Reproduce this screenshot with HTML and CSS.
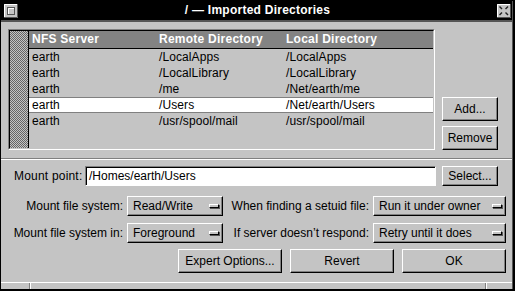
FILE: index.html
```html
<!DOCTYPE html>
<html>
<head>
<meta charset="utf-8">
<link rel="stylesheet" href="styles.css">
</head>
<body>
<div class="window">
  <div class="frame">
    <div class="titlebar">
      <span class="tb-btn">
        <svg width="14" height="14" viewBox="0 0 14 14">
          <rect x="0" y="0" width="14" height="14" fill="#c4c4c4"/>
          <path d="M0 13.5H13.5V0" fill="none" stroke="#555" stroke-width="1"/>
          <path d="M0.5 13V0.5H13" fill="none" stroke="#fff" stroke-width="1"/>
          <rect x="3.5" y="3.5" width="7" height="7" fill="#c4c4c4" stroke="#555" stroke-width="1"/>
          <path d="M4.5 10V4.5H10" fill="none" stroke="#fff" stroke-width="1"/>
        </svg>
      </span>
      <span class="title">/ — Imported Directories</span>
      <span class="tb-btn">
        <svg width="14" height="14" viewBox="0 0 14 14">
          <rect x="0" y="0" width="14" height="14" fill="#c4c4c4"/>
          <path d="M0 13.5H13.5V0" fill="none" stroke="#555" stroke-width="1"/>
          <path d="M0.5 13V0.5H13" fill="none" stroke="#fff" stroke-width="1"/>
          <g stroke="#222" stroke-width="1.4" fill="none">
            <path d="M2.5 2.5L5 5"/>
            <path d="M11 2.5L8.5 5"/>
            <path d="M2.5 11L5 8.5"/>
            <path d="M11 11L8.5 8.5"/>
          </g>
        </svg>
      </span>
    </div>

    <div class="top">
      <div class="bezel">
        <div class="bezel-in">
          <div class="scroller"></div>
          <div class="table">
            <div class="thead">
              <span>NFS Server</span><span>Remote Directory</span><span>Local Directory</span>
            </div>
            <div class="row"><span>earth</span><span>/LocalApps</span><span>/LocalApps</span></div>
            <div class="row"><span>earth</span><span>/LocalLibrary</span><span>/LocalLibrary</span></div>
            <div class="row"><span>earth</span><span>/me</span><span>/Net/earth/me</span></div>
            <div class="row sel"><span>earth</span><span>/Users</span><span>/Net/earth/Users</span></div>
            <div class="row"><span>earth</span><span>/usr/spool/mail</span><span>/usr/spool/mail</span></div>
          </div>
        </div>
      </div>
      <div class="side">
        <button class="btn side-btn">Add...</button>
        <button class="btn side-btn">Remove</button>
      </div>
    </div>

    <div class="sep"></div>

    <div class="mount-row">
      <span class="mp-label">Mount point:</span>
      <div class="field">/Homes/earth/Users</div>
      <button class="btn side-btn short">Select...</button>
    </div>

    <div class="opts">
      <span class="lbl">Mount file system:</span>
      <div class="btn popup"><span>Read/Write</span><i class="ind"></i></div>
      <span class="lbl">When finding a setuid file:</span>
      <div class="btn popup"><span>Run it under owner</span><i class="ind"></i></div>
      <span class="lbl">Mount file system in:</span>
      <div class="btn popup"><span>Foreground</span><i class="ind"></i></div>
      <span class="lbl">If server doesn’t respond:</span>
      <div class="btn popup"><span>Retry until it does</span><i class="ind"></i></div>
    </div>

    <div class="actions">
      <button class="btn act">Expert Options...</button>
      <button class="btn act">Revert</button>
      <button class="btn act">OK</button>
    </div>

    <div class="resizebar">
      <span class="rs rs-l"></span>
      <span class="rs rs-m"></span>
      <span class="rs rs-r"></span>
    </div>
  </div>
</div>
</body>
</html>
```

FILE: styles.css
```css
* { box-sizing: border-box; }
html, body { margin: 0; padding: 0; }
body {
  width: 515px;
  height: 291px;
  overflow: hidden;
  font-family: "Liberation Sans", Arial, sans-serif;
  font-size: 12px;
  color: #000;
  background: #c4c4c4;
}
.window {
  width: 515px;
  height: 291px;
  border: 1px solid #000;
  border-right-width: 2px;
  border-bottom-width: 2px;
  background: #c4c4c4;
  display: flex;
}
.frame {
  flex: 1;
  min-width: 0;
  display: flex;
  flex-direction: column;
  border-right: 1px solid #555;
}

/* title bar */
.titlebar {
  height: 21px;
  background: #000;
  border-bottom: 2px solid #555;
  display: flex;
  align-items: flex-start;
  padding: 0 1px 0 3px;
}
.tb-btn {
  width: 14px;
  height: 14px;
  margin-top: 3px;
  display: block;
}
.tb-btn svg { display: block; }
.title {
  flex: 1;
  text-align: center;
  color: #fff;
  font-weight: bold;
  font-size: 12px;
  letter-spacing: 0.25px;
  line-height: 19px;
}

/* top section */
.top {
  display: flex;
  align-items: flex-end;
  padding: 7px 0 0 7px;
}
.bezel {
  width: 427px;
  height: 121px;
  border: 1px solid;
  border-color: #808080 #fff #fff #808080;
}
.bezel-in {
  height: 100%;
  display: flex;
  border: 1px solid;
  border-color: #000 #c4c4c4 #c4c4c4 #000;
}
.scroller {
  width: 19px;
  border-right: 1px solid #000;
  background: repeating-conic-gradient(#666 0 25%, #c4c4c4 0 50%) 0 0 / 2px 2px;
}
.table { flex: 1; }
.thead, .row {
  display: grid;
  grid-template-columns: 127px 127px 1fr;
  white-space: nowrap;
}
.thead span, .row span { padding-left: 3px; }
.thead {
  height: 18px;
  line-height: 17px;
  background: #838383;
  color: #fff;
  font-weight: bold;
  letter-spacing: 0.25px;
  border-bottom: 1px solid #000;
}
.row {
  height: 16px;
  line-height: 16px;
  letter-spacing: 0.1px;
}
.row.sel {
  background: #fff;
  border-top: 1px solid #808080;
  border-bottom: 1px solid #808080;
  line-height: 14px;
}

/* buttons */
.btn {
  font-family: inherit;
  font-size: 12px;
  color: #000;
  background: #c4c4c4;
  margin: 0;
  padding: 0;
  border: 1px solid;
  border-color: #fff #000 #000 #fff;
  box-shadow: inset -1px -1px 0 #808080;
}
.side {
  display: flex;
  flex-direction: column;
  gap: 5px;
  margin-left: 7px;
}
.side-btn {
  width: 56px;
  height: 24px;
}
.side-btn.short { height: 20px; }

.sep {
  height: 2px;
  margin-top: 8px;
  border-top: 1px solid #808080;
  border-bottom: 1px solid #fff;
}

/* mount point row */
.mount-row {
  display: flex;
  align-items: center;
  margin-top: 6px;
  padding-left: 13px;
  height: 20px;
}
.mp-label { width: 71px; white-space: nowrap; letter-spacing: 0.2px; }
.field {
  width: 351px;
  height: 20px;
  background: #fff;
  border: 1px solid;
  border-color: #808080 #fff #fff #808080;
  box-shadow: inset 1px 1px 0 #000;
  padding-left: 3px;
  line-height: 18px;
  margin-right: 6px;
}

/* options grid */
.opts {
  display: grid;
  grid-template-columns: 126px 96px 150px 133px;
  grid-auto-rows: 20px;
  row-gap: 7px;
  margin-top: 10px;
}
.lbl {
  text-align: right;
  padding-right: 4px;
  line-height: 20px;
  white-space: nowrap;
}
.popup {
  display: flex;
  align-items: center;
  justify-content: space-between;
  padding: 0 2px 0 5px;
  white-space: nowrap;
}
.ind {
  display: block;
  width: 10px;
  height: 4px;
  background: #c4c4c4;
  border: 1px solid;
  border-color: #fff #000 #000 #fff;
  box-shadow: 1px 1px 0 #555;
  margin-right: 1px;
}

/* actions */
.actions {
  display: flex;
  justify-content: flex-end;
  gap: 8px;
  margin-top: 6px;
  padding-right: 6px;
}
.act {
  width: 104px;
  height: 24px;
}

/* resize bar */
.resizebar {
  margin-top: auto;
  height: 7px;
  border-top: 1px solid #fff;
  display: flex;
}
.rs { display: block; height: 100%; }
.rs-l { width: 29px; border-right: 1px solid #808080; }
.rs-m { flex: 1; border-left: 1px solid #fff; border-right: 1px solid #808080; }
.rs-r { width: 26px; border-left: 1px solid #fff; }
```
